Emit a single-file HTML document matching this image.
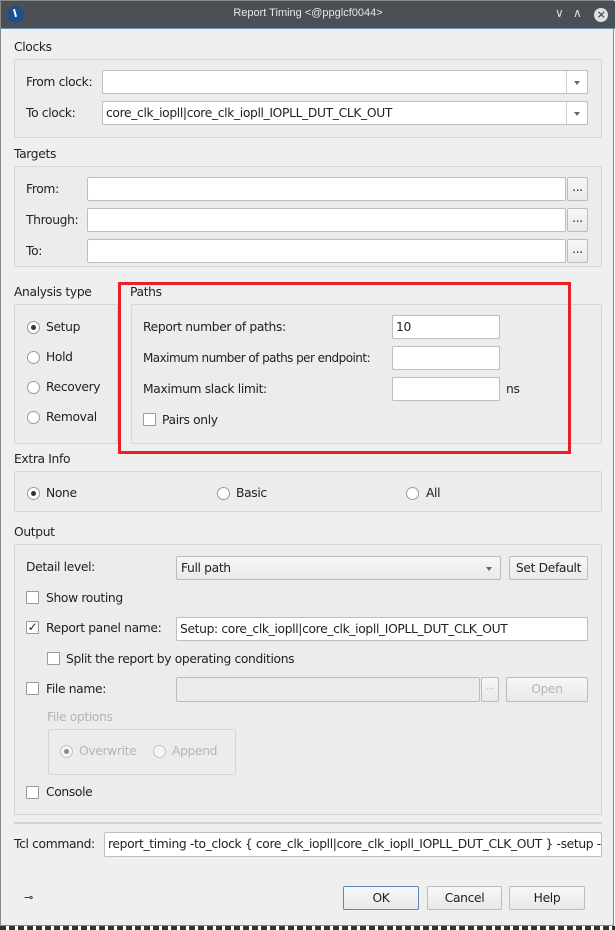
<!DOCTYPE html>
<html><head><meta charset="utf-8"><style>
*{box-sizing:border-box;margin:0;padding:0}
body{width:615px;height:930px;position:relative;background:#fff;font-family:"DejaVu Sans","Liberation Sans",sans-serif;font-size:12.3px;letter-spacing:-0.35px;color:#222;overflow:hidden}
.win{position:absolute;left:0;top:0;width:614px;height:926px;background:#efefef;border:1px solid #8a8a8a}
.a{position:absolute;white-space:nowrap}
.t{position:absolute;white-space:nowrap;line-height:16px;transform:translateY(-8px)}
.box{position:absolute;border:1px solid #d6d6d6;background:#ececec;border-radius:2px}
.in{position:absolute;background:#fff;border:1px solid #bdbdbd;border-radius:2px;line-height:22px;padding-left:3px;overflow:hidden;white-space:nowrap}
.btn{position:absolute;background:linear-gradient(#f7f7f7,#e9e9e9);border:1px solid #bcbcbc;border-radius:2px;text-align:center;line-height:22px}
.rad{position:absolute;width:13px;height:13px;border:1px solid #9a9a9a;border-radius:50%;background:#fff}
.rad.on::after{content:"";position:absolute;left:3px;top:3px;width:5px;height:5px;border-radius:50%;background:#333}
.chk{position:absolute;width:13px;height:13px;border:1px solid #9a9a9a;background:#fff;border-radius:1px}
.dd{position:absolute;right:0;top:0;width:21px;height:100%;border-left:1px solid #d0d0d0}
.dd::after{content:"";position:absolute;left:7px;top:10px;border-left:3px solid transparent;border-right:3px solid transparent;border-top:4px solid #666}
.dis{color:#b4b4b4}
</style></head><body>
<div class="win">
<div class="a" style="left:0;top:0;width:614px;height:28px;background:#4b5056;border-bottom:1px solid #6a8fb5"></div>
<div class="a" style="left:6px;top:5px;width:17px;height:17px;border-radius:50%;background:#1d4f8f"></div>
<div class="a" style="left:13px;top:8px;width:2px;height:8px;background:#fff;transform:rotate(-15deg)"></div>
<div class="a" style="left:0;width:614px;top:6px;text-align:center;color:#e6e6e6;font-size:11px;letter-spacing:0;font-family:'Liberation Sans',sans-serif">Report Timing &lt;@ppglcf0044&gt;</div>
<div class="a" style="left:554px;top:5px;color:#ddd;font-size:12px">&#x2228;</div>
<div class="a" style="left:572px;top:5px;color:#ddd;font-size:12px">&#x2227;</div>
<div class="a" style="left:593px;top:7px;width:14px;height:14px;border-radius:50%;background:#e0e0e0;color:#4b5056;font-size:11px;line-height:14px;text-align:center;font-weight:bold">×</div>

<div class="t" style="left:13px;top:46px">Clocks</div>
<div class="box" style="left:13px;top:58px;width:588px;height:79px"></div>
<div class="t" style="left:25px;top:81px">From clock:</div>
<div class="in" style="left:101px;top:69px;width:486px;height:24px"><div class="dd"></div></div>
<div class="t" style="left:25px;top:112px">To clock:</div>
<div class="in" style="left:101px;top:100px;width:486px;height:24px">core_clk_iopll|core_clk_iopll_IOPLL_DUT_CLK_OUT<div class="dd"></div></div>

<div class="t" style="left:13px;top:153px">Targets</div>
<div class="box" style="left:13px;top:165px;width:588px;height:101px"></div>
<div class="t" style="left:25px;top:188px">From:</div>
<div class="in" style="left:86px;top:176px;width:479px;height:24px"></div>
<div class="btn" style="left:566px;top:176px;width:21px;height:24px;line-height:18px">...</div>
<div class="t" style="left:25px;top:219px">Through:</div>
<div class="in" style="left:86px;top:207px;width:479px;height:24px"></div>
<div class="btn" style="left:566px;top:207px;width:21px;height:24px;line-height:18px">...</div>
<div class="t" style="left:25px;top:250px">To:</div>
<div class="in" style="left:86px;top:238px;width:479px;height:24px"></div>
<div class="btn" style="left:566px;top:238px;width:21px;height:24px;line-height:18px">...</div>

<div class="t" style="left:13px;top:291px">Analysis type</div>
<div class="box" style="left:13px;top:303px;width:104px;height:140px"></div>
<div class="rad on" style="left:26px;top:320px"></div><div class="t" style="left:45px;top:326px">Setup</div>
<div class="rad" style="left:26px;top:350px"></div><div class="t" style="left:45px;top:356px">Hold</div>
<div class="rad" style="left:26px;top:380px"></div><div class="t" style="left:45px;top:386px">Recovery</div>
<div class="rad" style="left:26px;top:410px"></div><div class="t" style="left:45px;top:416px">Removal</div>

<div class="t" style="left:129px;top:291px">Paths</div>
<div class="box" style="left:130px;top:303px;width:471px;height:140px"></div>
<div class="t" style="left:142px;top:326px">Report number of paths:</div>
<div class="in" style="left:391px;top:314px;width:108px;height:24px">10</div>
<div class="t" style="left:142px;top:357px;font-size:12px;letter-spacing:-0.55px">Maximum number of paths per endpoint:</div>
<div class="in" style="left:391px;top:345px;width:108px;height:24px"></div>
<div class="t" style="left:142px;top:388px">Maximum slack limit:</div>
<div class="in" style="left:391px;top:376px;width:108px;height:24px"></div>
<div class="t" style="left:505px;top:388px">ns</div>
<div class="chk" style="left:142px;top:412px"></div><div class="t" style="left:161px;top:419px">Pairs only</div>
<div class="a" style="left:117px;top:281px;width:453px;height:172px;border:3px solid #e8202a"></div>

<div class="t" style="left:13px;top:458px">Extra Info</div>
<div class="box" style="left:13px;top:470px;width:588px;height:41px"></div>
<div class="rad on" style="left:26px;top:486px"></div><div class="t" style="left:45px;top:492px">None</div>
<div class="rad" style="left:216px;top:486px"></div><div class="t" style="left:235px;top:492px">Basic</div>
<div class="rad" style="left:405px;top:486px"></div><div class="t" style="left:425px;top:492px">All</div>

<div class="t" style="left:13px;top:531px">Output</div>
<div class="box" style="left:13px;top:543px;width:588px;height:271px"></div>
<div class="t" style="left:25px;top:566px">Detail level:</div>
<div class="btn" style="left:175px;top:555px;width:325px;height:24px;text-align:left;padding-left:4px">Full path<div class="dd" style="border-left:none"></div></div>
<div class="btn" style="left:508px;top:555px;width:79px;height:24px">Set Default</div>
<div class="chk" style="left:25px;top:590px"></div><div class="t" style="left:45px;top:597px">Show routing</div>
<div class="chk" style="left:25px;top:620px;font-size:12px;line-height:11px;text-align:center">✓</div><div class="t" style="left:45px;top:627px">Report panel name:</div>
<div class="in" style="left:175px;top:616px;width:412px;height:24px">Setup: core_clk_iopll|core_clk_iopll_IOPLL_DUT_CLK_OUT</div>
<div class="chk" style="left:46px;top:651px"></div><div class="t" style="left:65px;top:658px">Split the report by operating conditions</div>
<div class="chk" style="left:25px;top:681px"></div><div class="t" style="left:45px;top:688px">File name:</div>
<div class="in" style="left:175px;top:676px;width:304px;height:25px;background:#ececec"></div>
<div class="btn dis" style="left:480px;top:676px;width:18px;height:25px;line-height:18px;font-size:9px">...</div>
<div class="btn dis" style="left:505px;top:676px;width:82px;height:25px">Open</div>
<div class="t dis" style="left:46px;top:716px">File options</div>
<div class="box" style="left:47px;top:728px;width:188px;height:46px"></div>
<div class="rad on" style="left:59px;top:744px;opacity:.5"></div><div class="t dis" style="left:78px;top:750px">Overwrite</div>
<div class="rad" style="left:152px;top:744px;opacity:.5"></div><div class="t dis" style="left:171px;top:750px">Append</div>
<div class="chk" style="left:25px;top:785px"></div><div class="t" style="left:45px;top:791px">Console</div>

<div class="a" style="left:13px;top:821px;width:588px;height:2px;background:#d3d3d3"></div>
<div class="t" style="left:13px;top:843px">Tcl command:</div>
<div class="in" style="left:103px;top:831px;width:498px;height:25px">report_timing -to_clock { core_clk_iopll|core_clk_iopll_IOPLL_DUT_CLK_OUT } -setup -npaths 10 -detail full_path -panel_name</div>

<div class="t" style="left:23px;top:897px;font-size:11px">⊸</div>
<div class="btn" style="left:342px;top:885px;width:76px;height:24px;border-color:#5b86b8">OK</div>
<div class="btn" style="left:426px;top:885px;width:75px;height:24px">Cancel</div>
<div class="btn" style="left:508px;top:885px;width:76px;height:24px">Help</div>
</div>
<div class="a" style="left:0;top:926px;width:615px;height:4px;background:repeating-linear-gradient(90deg,#333 0 6px,#fff 6px 9px)"></div>
</body></html>
